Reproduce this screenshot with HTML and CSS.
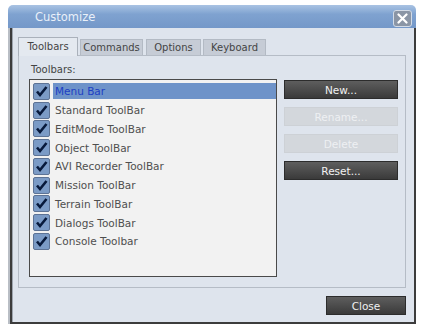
FILE: index.html
```html
<!DOCTYPE html>
<html lang="en">
<head>
  <meta charset="UTF-8">
  <title>Customize</title>
  <link rel="stylesheet" href="styles.css">
</head>
<body>

  <div class="dialog">
    <div class="titlebar">
      <span class="title">Customize</span>
      <span class="close-x">
        <svg width="11" height="11" viewBox="0 0 11 11"><path d="M1.5 1.5 L9.5 9.5 M9.5 1.5 L1.5 9.5" stroke="#fff" stroke-width="2.2" stroke-linecap="round"/></svg>
      </span>
    </div>

    <div class="frame">
      <div class="tabs">
        <div class="tab active">Toolbars</div>
        <div class="tab tab-commands">Commands</div>
        <div class="tab tab-options">Options</div>
        <div class="tab tab-keyboard">Keyboard</div>
      </div>

      <div class="panel">
        <div class="label">Toolbars:</div>
        <div class="panel-body">
          <div class="list">
            <div class="row selected"><span class="check"></span><span class="name">Menu Bar</span></div>
            <div class="row"><span class="check"></span><span class="name">Standard ToolBar</span></div>
            <div class="row"><span class="check"></span><span class="name">EditMode ToolBar</span></div>
            <div class="row"><span class="check"></span><span class="name">Object ToolBar</span></div>
            <div class="row"><span class="check"></span><span class="name">AVI Recorder ToolBar</span></div>
            <div class="row"><span class="check"></span><span class="name">Mission ToolBar</span></div>
            <div class="row"><span class="check"></span><span class="name">Terrain ToolBar</span></div>
            <div class="row"><span class="check"></span><span class="name">Dialogs ToolBar</span></div>
            <div class="row"><span class="check"></span><span class="name">Console Toolbar</span></div>
          </div>

          <div class="buttons">
            <button class="btn">New...</button>
            <button class="btn disabled">Rename...</button>
            <button class="btn disabled">Delete</button>
            <button class="btn">Reset...</button>
          </div>
        </div>
      </div>

      <div class="footer">
        <button class="btn close-btn">Close</button>
      </div>
    </div>
  </div>

</body>
</html>
```

FILE: styles.css
```css
body {
  margin: 0;
  padding: 0;
  background: #fff;
  font-family: 'DejaVu Sans', Verdana, sans-serif;
  font-size: 10px;
  color: #333;
}

.dialog {
  margin: 5px 0 0 8px;
  width: 408px;
}

.titlebar {
  height: 23px;
  background: linear-gradient(to bottom, #a9c3e3, #7fa2d0 40%, #7498c9);
  border-radius: 5px 5px 0 0;
  display: flex;
  align-items: center;
  justify-content: space-between;
  padding: 0 4px 0 27px;
}

.title {
  color: #e9f0f9;
  font-size: 11.5px;
}

.close-x {
  width: 17px;
  height: 15px;
  background: #8a95a5;
  border: 1px solid #d3dbe6;
  border-radius: 3px;
  display: flex;
  align-items: center;
  justify-content: center;
  margin-top: 4px;
}

.frame {
  margin-left: 2px;
  background: #dee4ed;
  border-left: 2px solid #3c3c3c;
  border-right: 2px solid #3c3c3c;
  border-bottom: 2px solid #3c3c3c;
  box-shadow: inset 1px 0 0 #9ea5ae, -2px 0 0 #b9bec5;
  padding: 9px 8px 7px 6px;
}

.tabs {
  display: flex;
  align-items: flex-end;
  gap: 2px;
  height: 18px;
}

.tab {
  height: 15px;
  line-height: 15px;
  text-align: center;
  background: #c6ccd6;
  border: 1px solid #b3bac4;
  border-bottom: none;
  color: #444;
  font-size: 10px;
}

.tab-commands {
  width: 61px;
}

.tab-options {
  width: 53px;
  margin-left: 1px;
}

.tab-keyboard {
  width: 61px;
}

.tab.active {
  height: 18px;
  line-height: 17px;
  width: 58px;
  background: #e4e9f0;
  border-color: #aab1bb;
  position: relative;
  top: 1px;
}

.panel {
  height: 223px;
  border: 1px solid #b5bcc6;
  padding: 8px 7px 0 10px;
}

.label {
  color: #444;
  margin-left: 2px;
  height: 15px;
}

.panel-body {
  display: flex;
  gap: 7px;
}

.list {
  width: 246px;
  height: 194px;
  background: #f2f2f2;
  border: 1px solid #4a4a4a;
  padding-top: 2px;
}

.row {
  height: 18.75px;
  display: flex;
  align-items: center;
  padding-left: 3px;
}

.check {
  width: 15px;
  height: 15px;
  background: #7b9bc6 url("data:image/svg+xml,%3Csvg xmlns='http://www.w3.org/2000/svg' width='15' height='15'%3E%3Cpath d='M3 7.5 L6 11 L12.5 3' fill='none' stroke='%23081a3c' stroke-width='2.6'/%3E%3C/svg%3E") no-repeat center;
  border: 1px solid #5d7395;
  border-radius: 2px;
  flex-shrink: 0;
}

.name {
  margin-left: 3px;
  padding-left: 2px;
  flex: 1;
  height: 16px;
  line-height: 16px;
  color: #4f4f4f;
  font-size: 10.5px;
}

.row.selected .name {
  background: #6e93c9;
  color: #1d3fc4;
}

.buttons {
  display: flex;
  flex-direction: column;
  gap: 8px;
  padding-top: 1px;
}

.btn {
  width: 114px;
  height: 19px;
  font-family: 'DejaVu Sans', Verdana, sans-serif;
  font-size: 10.5px;
  color: #f1f1f1;
  background: linear-gradient(to bottom, #5e5e5e, #3a3a3a);
  border: 1px solid #2c2c2c;
  padding: 0;
}

.btn.disabled {
  background: #d3d7dc;
  border-color: #cdd1d6;
  color: #eef0f3;
}

.footer {
  display: flex;
  justify-content: flex-end;
  padding-top: 8px;
}

.close-btn {
  width: 80px;
}
```
